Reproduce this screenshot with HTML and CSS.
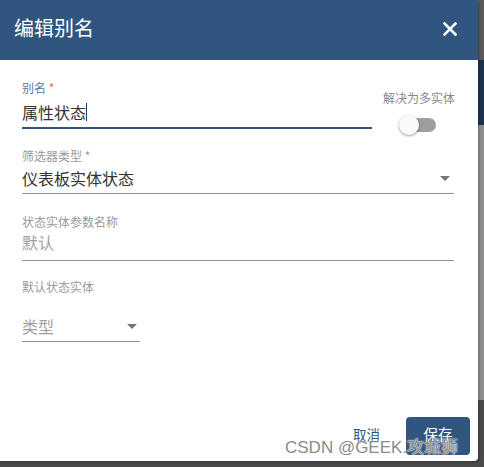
FILE: index.html
```html
<!DOCTYPE html>
<html lang="zh">
<head>
    <meta charset="UTF-8">
    <title>编辑别名</title>
    <link rel="stylesheet" href="styles.css">
</head>
<body>
    <div class="screen">
        <!-- Boîte de dialogue -->
        <div class="dialog">
            <div class="dialog-header">
                <span class="dialog-title">编辑别名</span>
                <button class="close-btn" aria-label="close">
                    <svg width="14" height="14" viewBox="0 0 14 14">
                        <path d="M1.5 1.5 L12.5 12.5 M12.5 1.5 L1.5 12.5" stroke="#ffffff" stroke-width="2.6" stroke-linecap="square" fill="none"/>
                    </svg>
                </button>
            </div>

            <div class="dialog-content">
                <div class="row-first">
                    <div class="field field-alias">
                        <div class="field-label label-active">别名 <span class="required">*</span></div>
                        <div class="field-value">属性状态<span class="caret"></span></div>
                    </div>
                    <div class="toggle-group">
                        <div class="toggle-label">解决为多实体</div>
                        <div class="toggle">
                            <span class="toggle-track"></span>
                            <span class="toggle-thumb"></span>
                        </div>
                    </div>
                </div>

                <div class="field field-type">
                    <div class="field-label">筛选器类型 *</div>
                    <div class="field-value select-value">
                        <span>仪表板实体状态</span>
                        <span class="arrow"></span>
                    </div>
                </div>

                <div class="field field-param">
                    <div class="field-label">状态实体参数名称</div>
                    <div class="field-value placeholder">默认</div>
                </div>

                <div class="field field-default">
                    <div class="field-label">默认状态实体</div>
                    <div class="field-value select-value small-select placeholder">
                        <span>类型</span>
                        <span class="arrow"></span>
                    </div>
                </div>
            </div>

            <div class="dialog-actions">
                <button class="btn-cancel">取消</button>
                <button class="btn-save">保存</button>
            </div>
        </div>

        <!-- Arrière-plan visible à droite -->
        <div class="backdrop-side">
            <div class="side-a"></div>
            <div class="side-b"></div>
            <div class="side-c"></div>
            <div class="side-d"></div>
        </div>
    </div>
    <div class="backdrop-bottom"></div>

    <div class="watermark">CSDN @GEEK.攻城狮</div>
</body>
</html>
```

FILE: styles.css
```css
/* Général */
body {
    margin: 0;
    width: 484px;
    height: 467px;
    overflow: hidden;
    background-color: #4b4b4b;
    font-family: "Noto Sans CJK SC", "Noto Sans", sans-serif;
    color: #333333;
    position: relative;
}

.screen {
    display: flex;
    height: 461px;
}

/* Boîte de dialogue */
.dialog {
    width: 478px;
    height: 461px;
    background-color: #ffffff;
    border-bottom-right-radius: 4px;
    display: flex;
    flex-direction: column;
    box-shadow: 1px 1px 3px rgba(0, 0, 0, 0.3);
    position: relative;
    z-index: 1;
}

.dialog-header {
    height: 60px;
    background-color: #305680;
    display: flex;
    align-items: center;
    justify-content: space-between;
    padding: 0 21px 0 14px;
}

.dialog-title {
    color: #ffffff;
    font-size: 20px;
    line-height: 24px;
    padding-bottom: 4px;
}

.close-btn {
    background: none;
    border: none;
    padding: 0;
    width: 14px;
    height: 14px;
    display: flex;
    margin-bottom: 3px;
}

.dialog-content {
    flex: 1;
    padding: 21px 24px 0 22px;
}

/* Champs */
.field {
    border-bottom: 1px solid #8f8f8f;
}

.field-label {
    font-size: 12px;
    line-height: 14px;
    color: #9a9a9a;
}

.label-active {
    color: #5a7aa3;
}

.required {
    color: #f26b4a;
}

.field-value {
    font-size: 16px;
    line-height: 22px;
    color: #333333;
    display: flex;
    align-items: center;
}

.placeholder {
    color: #9e9e9e;
}

.caret {
    display: inline-block;
    width: 1px;
    height: 18px;
    background-color: #1e3a5f;
}

.row-first {
    display: flex;
    align-items: flex-start;
}

.field-alias {
    width: 350px;
    border-bottom: 2px solid #305680;
}

.field-alias .field-label {
    margin-bottom: 6px;
}

.field-alias .field-value {
    padding-bottom: 4px;
}

.toggle-group {
    margin-left: auto;
    margin-top: 10px;
    display: flex;
    flex-direction: column;
    align-items: center;
}

.toggle-label {
    font-size: 12px;
    line-height: 14px;
    color: #888888;
    margin-right: -1px;
}

.toggle {
    position: relative;
    width: 37px;
    height: 20px;
    margin-top: 10px;
    margin-left: -1px;
}

.toggle-track {
    position: absolute;
    left: 3px;
    top: 3px;
    width: 34px;
    height: 14px;
    border-radius: 7px;
    background-color: #9e9e9e;
}

.toggle-thumb {
    position: absolute;
    left: 0;
    top: 0;
    width: 20px;
    height: 20px;
    border-radius: 50%;
    background-color: #fafafa;
    box-shadow: 0 1px 3px rgba(0, 0, 0, 0.4);
}

.field-type {
    margin-top: 14px;
}

.field-type .field-label {
    margin-bottom: 4px;
}

.field-type .field-value {
    padding-bottom: 4px;
}

.select-value {
    justify-content: space-between;
}

.arrow {
    width: 0;
    height: 0;
    border-left: 5px solid transparent;
    border-right: 5px solid transparent;
    border-top: 5px solid #757575;
    margin-right: 4px;
}

.field-param {
    margin-top: 21px;
}

.field-param .field-label {
    margin-bottom: 2px;
}

.field-param .field-value {
    padding-bottom: 7px;
}

.field-default {
    margin-top: 19px;
    border-bottom: none;
}

.field-default .field-label {
    margin-bottom: 21px;
}

.small-select {
    width: 118px;
    padding-bottom: 4px;
    border-bottom: 1px solid #8f8f8f;
}

.small-select .arrow {
    margin-right: 3px;
}

/* Boutons */
.dialog-actions {
    display: flex;
    justify-content: flex-end;
    align-items: center;
    padding: 0 8px 6px 0;
}

.btn-cancel {
    background: none;
    border: none;
    font-family: "Noto Sans CJK SC", sans-serif;
    font-size: 13.5px;
    color: #305680;
    padding: 0 8px 5px;
    margin-right: 18px;
    height: 38px;
}

.btn-save {
    background-color: #305680;
    border: none;
    border-radius: 4px;
    color: #ffffff;
    font-family: "Noto Sans CJK SC", sans-serif;
    font-size: 14.5px;
    width: 64px;
    height: 38px;
    padding: 0 0 5px;
}

/* Arrière-plan */
.backdrop-side {
    width: 6px;
    display: flex;
    flex-direction: column;
}

.side-a {
    height: 60px;
    background-color: #5a5a5a;
}

.side-b {
    height: 65px;
    background-color: #1d3451;
}

.side-c {
    height: 275px;
    background-color: #8f8f8f;
}

.side-d {
    flex: 1;
    background-color: #4b4b4b;
}

.backdrop-bottom {
    height: 6px;
    background-color: #4b4b4b;
}

/* Filigrane */
.watermark {
    position: absolute;
    left: 285px;
    top: 438px;
    z-index: 5;
    font-family: "Liberation Sans", "Noto Sans CJK SC", sans-serif;
    font-size: 17px;
    line-height: 20px;
    color: #8a8a8a;
    text-shadow: 0 0 2px #ffffff, 0 0 1px #ffffff;
}
```
